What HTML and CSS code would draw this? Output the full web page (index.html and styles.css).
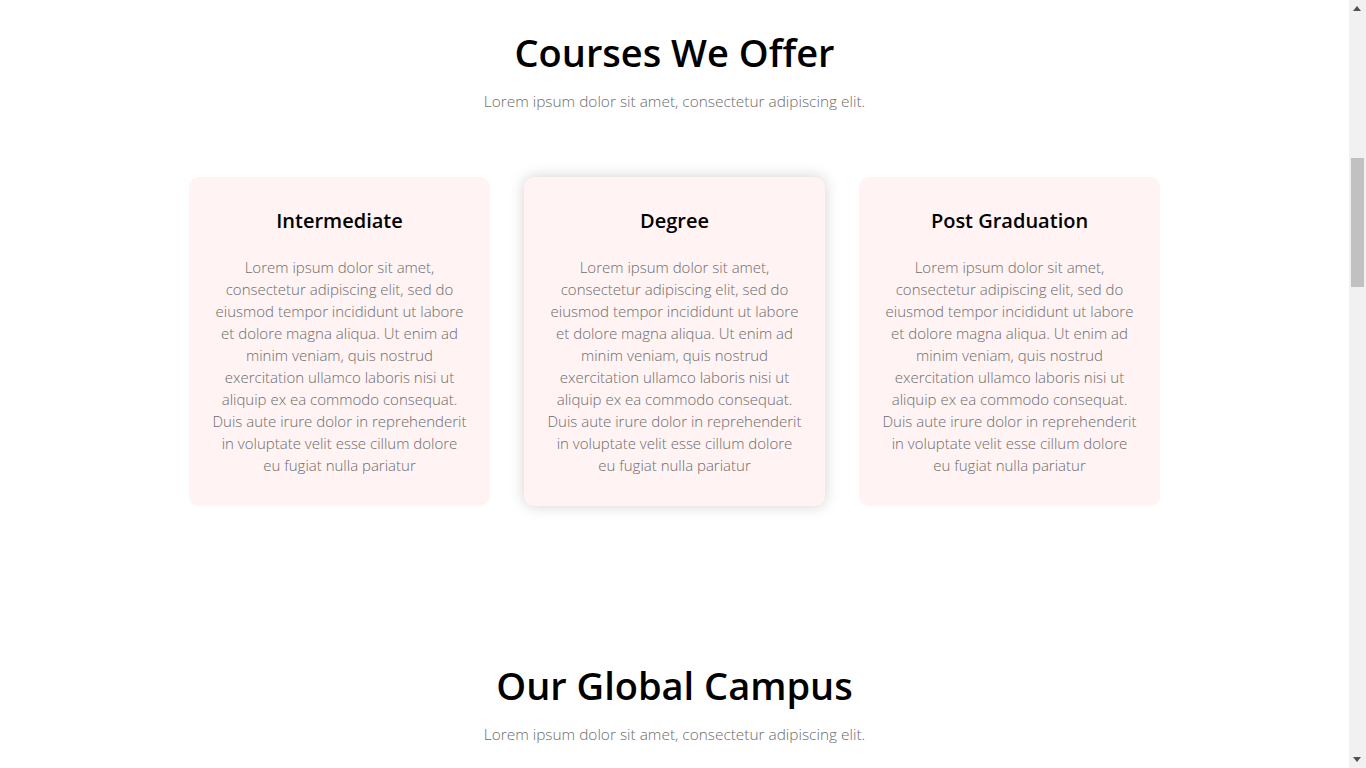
FILE: index.html
```html
<!DOCTYPE html>
<html lang="en">
<head>
<meta charset="utf-8">
<title>Courses</title>
<link rel="stylesheet" href="styles.css">
</head>
<body>
<div class="page">
  <section class="section courses">
    <h1 class="section-title">Courses We Offer</h1>
    <p class="section-sub">Lorem ipsum dolor sit amet, consectetur adipiscing elit.</p>
    <div class="cards">
      <div class="card">
        <h3>Intermediate</h3>
        <p>Lorem ipsum dolor sit amet, consectetur adipiscing elit, sed do eiusmod tempor incididunt ut labore et dolore magna aliqua. Ut enim ad minim veniam, quis nostrud exercitation ullamco laboris nisi ut aliquip ex ea commodo consequat. Duis aute irure dolor in reprehenderit in voluptate velit esse cillum dolore eu fugiat nulla pariatur</p>
      </div>
      <div class="card card-hover">
        <h3>Degree</h3>
        <p>Lorem ipsum dolor sit amet, consectetur adipiscing elit, sed do eiusmod tempor incididunt ut labore et dolore magna aliqua. Ut enim ad minim veniam, quis nostrud exercitation ullamco laboris nisi ut aliquip ex ea commodo consequat. Duis aute irure dolor in reprehenderit in voluptate velit esse cillum dolore eu fugiat nulla pariatur</p>
      </div>
      <div class="card">
        <h3>Post Graduation</h3>
        <p>Lorem ipsum dolor sit amet, consectetur adipiscing elit, sed do eiusmod tempor incididunt ut labore et dolore magna aliqua. Ut enim ad minim veniam, quis nostrud exercitation ullamco laboris nisi ut aliquip ex ea commodo consequat. Duis aute irure dolor in reprehenderit in voluptate velit esse cillum dolore eu fugiat nulla pariatur</p>
      </div>
    </div>
  </section>
  <section class="section campus">
    <h1 class="section-title">Our Global Campus</h1>
    <p class="section-sub">Lorem ipsum dolor sit amet, consectetur adipiscing elit.</p>
  </section>
</div>
<div class="scrollbar" aria-hidden="true">
  <span class="sb-arrow sb-up"></span>
  <span class="sb-thumb"></span>
  <span class="sb-arrow sb-down"></span>
</div>
</body>
</html>
```
FILE: styles.css
```css
html, body {
  margin: 0;
  padding: 0;
}
body {
  font-family: "Open Sans", "Liberation Sans", sans-serif;
  background: #fff;
  color: #000;
}
.page {
  width: calc(100% - 17px);
  min-height: 900px;
}
.section {
  width: 971px;
  margin: 0 auto;
  text-align: center;
}
.courses {
  padding-top: 29px;
}
.section-title {
  margin: 0;
  font-size: 38px;
  line-height: 46px;
  font-weight: 600;
  color: #000;
}
.section-sub {
  margin: 16px 0 0;
  font-size: 15.4px;
  line-height: 22px;
  font-weight: 300;
  color: #6c6c6c;
}
.cards {
  display: flex;
  gap: 34px;
  margin-top: 64px;
}
.card {
  flex: 1;
  background: #fff3f3;
  border-radius: 10px;
  padding: 30px 23px;
  height: 329px;
  box-sizing: border-box;
}
.card-hover {
  box-shadow: 0 0 15px rgba(0, 0, 0, 0.18);
}
.card h3 {
  margin: 0;
  font-size: 20px;
  line-height: 28px;
  font-weight: 600;
}
.card p {
  margin: 21px 0 0;
  font-size: 15px;
  line-height: 22px;
  font-weight: 300;
  color: #6c6c6c;
}
.campus {
  padding-top: 156px;
}
.scrollbar {
  position: fixed;
  top: 0;
  right: 0;
  width: 17px;
  height: 100vh;
  background: #f1f1f1;
}
.sb-arrow {
  position: absolute;
  left: 4px;
  width: 0;
  height: 0;
  border-left: 4.5px solid transparent;
  border-right: 4.5px solid transparent;
}
.sb-up {
  top: 6px;
  border-bottom: 5px solid #505050;
}
.sb-down {
  bottom: 6px;
  border-top: 5px solid #505050;
}
.sb-thumb {
  position: absolute;
  left: 2px;
  right: 2px;
  top: 158px;
  height: 129px;
  background: #c1c1c1;
}
```
